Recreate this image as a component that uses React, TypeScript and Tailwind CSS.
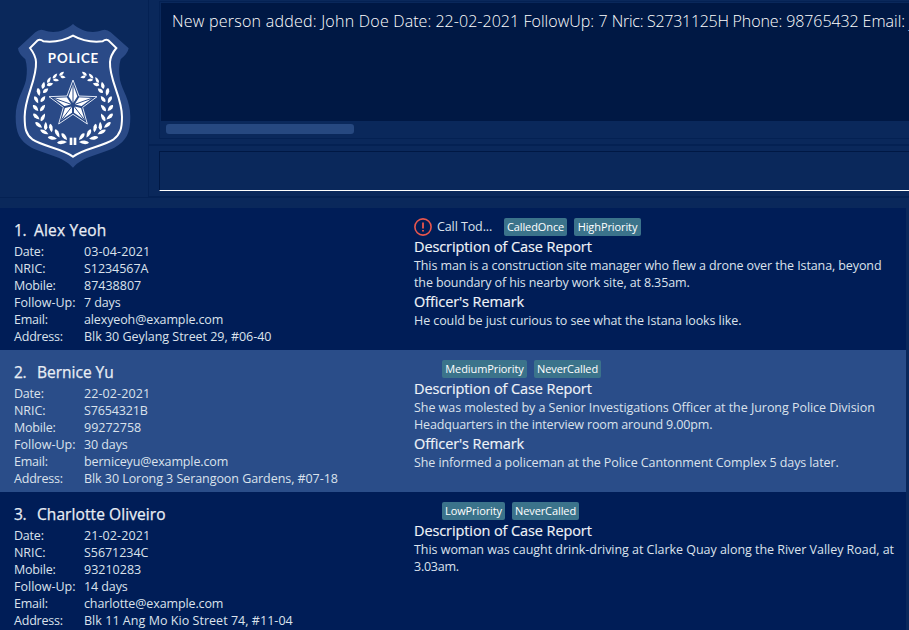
type Line = { text: string; cls?: string };
type Person = {
  id: number;
  name: Line;
  fields: { label: Line; value: Line }[];
  alert?: string;
  tags: Line[];
  description: Line[];
  remark: Line[];
  selected?: boolean;
};

const labels = {
  date: { text: "Date:", cls: "tracking-[-0.2px]" },
  nric: { text: "NRIC:", cls: "tracking-[-0.05px]" },
  mobile: { text: "Mobile:", cls: "tracking-[-0.2px]" },
  followUp: { text: "Follow-Up:", cls: "tracking-normal" },
  email: { text: "Email:", cls: "tracking-[-0.2px]" },
  address: { text: "Address:", cls: "tracking-[-0.2px]" },
};

const people: Person[] = [
  {
    id: 1,
    name: { text: "Alex Yeoh", cls: "-ml-[3px] tracking-[0.2px]" },
    fields: [
      { label: labels.date, value: { text: "03-04-2021", cls: "tracking-[0.1px]" } },
      { label: labels.nric, value: { text: "S1234567A", cls: "tracking-[-0.05px]" } },
      { label: labels.mobile, value: { text: "87438807" } },
      { label: labels.followUp, value: { text: "7 days", cls: "tracking-[-0.1px]" } },
      { label: labels.email, value: { text: "alexyeoh@example.com", cls: "tracking-[-0.12px]" } },
      { label: labels.address, value: { text: "Blk 30 Geylang Street 29, #06-40", cls: "tracking-[-0.03px]" } },
    ],
    alert: "Call Tod...",
    tags: [
      { text: "CalledOnce", cls: "w-[63px]" },
      { text: "HighPriority", cls: "w-[67px]" },
    ],
    description: [
      {
        text: "This man is a construction site manager who flew a drone over the Istana, beyond",
        cls: "tracking-[-0.1px]",
      },
      { text: "the boundary of his nearby work site, at 8.35am.", cls: "tracking-[-0.12px]" },
    ],
    remark: [
      { text: "He could be just curious to see what the Istana looks like.", cls: "tracking-[-0.08px]" },
    ],
  },
  {
    id: 2,
    name: { text: "Bernice Yu" },
    selected: true,
    fields: [
      { label: labels.date, value: { text: "22-02-2021", cls: "tracking-[0.1px]" } },
      { label: labels.nric, value: { text: "S7654321B", cls: "tracking-[-0.15px]" } },
      { label: labels.mobile, value: { text: "99272758" } },
      { label: labels.followUp, value: { text: "30 days", cls: "tracking-[-0.1px]" } },
      { label: labels.email, value: { text: "berniceyu@example.com", cls: "tracking-[-0.14px]" } },
      { label: labels.address, value: { text: "Blk 30 Lorong 3 Serangoon Gardens, #07-18", cls: "tracking-[-0.06px]" } },
    ],
    tags: [
      { text: "MediumPriority", cls: "w-[85px]" },
      { text: "NeverCalled", cls: "w-[67px]" },
    ],
    description: [
      {
        text: "She was molested by a Senior Investigations Officer at the Jurong Police Division",
        cls: "tracking-[-0.045px]",
      },
      { text: "Headquarters in the interview room around 9.00pm.", cls: "tracking-[-0.14px]" },
    ],
    remark: [
      { text: "She informed a policeman at the Police Cantonment Complex 5 days later.", cls: "tracking-[-0.1px]" },
    ],
  },
  {
    id: 3,
    name: { text: "Charlotte Oliveiro", cls: "tracking-[0.08px]" },
    fields: [
      { label: labels.date, value: { text: "21-02-2021", cls: "tracking-[0.1px]" } },
      { label: labels.nric, value: { text: "S5671234C", cls: "tracking-[-0.05px]" } },
      { label: labels.mobile, value: { text: "93210283" } },
      { label: labels.followUp, value: { text: "14 days", cls: "tracking-[-0.1px]" } },
      { label: labels.email, value: { text: "charlotte@example.com", cls: "tracking-[-0.12px]" } },
      { label: labels.address, value: { text: "Blk 11 Ang Mo Kio Street 74, #11-04", cls: "tracking-[0.04px]" } },
    ],
    tags: [
      { text: "LowPriority", cls: "w-[63px]" },
      { text: "NeverCalled", cls: "w-[67px]" },
    ],
    description: [
      {
        text: "This woman was caught drink-driving at Clarke Quay along the River Valley Road, at",
        cls: "tracking-[-0.035px]",
      },
      { text: "3.03am.", cls: "tracking-[-0.25px]" },
    ],
    remark: [],
  },
];

/* Left half of the wreath: x, y, rotation in degrees, half length */
const leaves: [number, number, number, number][] = [
  [185, 221, -38, 9],
  [189, 231, 12, 8],
  [165, 228, -48, 10],
  [168, 240, 3, 9],
  [147, 240, -60, 10],
  [150, 253, -14, 10],
  [130, 256, -78, 11],
  [137, 272, -38, 10],
  [116, 276, 78, 12],
  [129, 297, -52, 11],
  [109, 299, 62, 12],
  [128, 324, -52, 12],
  [107, 324, 48, 12],
  [129, 352, -62, 13],
  [109, 350, 42, 13],
  [137, 378, -88, 13],
  [116, 375, 38, 13],
  [153, 384, 80, 13],
  [133, 396, 28, 14],
  [172, 400, 62, 14],
  [157, 414, 10, 14],
  [193, 410, 50, 13],
  [186, 427, -4, 15],
];

const half = (
  <>
    {leaves.map(([x, y, r, l], i) => (
      <path
        key={i}
        d="M-12 0Q-5 -6.5 3 -6.3Q10 -5 12 0Q10 5 3 6.3Q-5 6.5 -12 0Z"
        transform={`translate(${x} ${y}) rotate(${r}) scale(${-l / 12} ${y < 245 ? 0.65 : 0.84})`}
      />
    ))}
    <rect x="209" y="413" width="8" height="22" />
  </>
);

function Badge() {
  return (
    <svg width="148" height="196" viewBox="0 0 444 588" aria-hidden="true">
      <path
        fill="#2a4a87"
        d="M219 72C196 92 164 103 132 91Q119 86 106 97L54 145Q55 161 76 178Q84 205 78 240C71 272 47 300 47 350C47 398 58 422 95 443C135 463 190 468 219 503C248 468 303 463 343 443C380 422 391 398 391 350C391 300 367 272 360 240Q354 205 362 178Q383 161 386 145L332 97Q319 86 306 91C274 103 242 92 219 72Z"
      />
      <path
        fill="none"
        stroke="#fff"
        strokeWidth="6"
        d="M219 107C194 121 166 128 130 124Q121 117 113 121L90 144Q107 166 108 186C111 240 74 290 74 350C74 385 77 402 97 418C130 440 187 445 219 470C251 445 308 440 341 418C361 402 366 385 366 350C366 290 327 240 330 186Q331 166 349 144L325 121Q317 117 308 124C272 128 244 121 219 107Z"
      />
      <text
        x="219"
        y="188"
        fill="#fff"
        textAnchor="middle"
        textLength="151"
        fontSize="40"
        fontWeight="700"
        fontFamily="Lato, sans-serif"
      >
        POLICE
      </text>
      <g fill="#fff">
        {half}
        <g transform="translate(438 0) scale(-1 1)">{half}</g>
      </g>
      <path
        fill="none"
        stroke="#dfe6f3"
        strokeWidth="3"
        d="M219 240L237 288L291 290L248 322L262 372L219 343L176 372L190 322L147 290L201 288Z"
      />
      <path
        fill="#fff"
        d="M219 253L233 292L277 294L242 320L254 360L219 336L184 360L196 320L161 294L205 292Z"
      />
      <g fill="none" stroke="#2a4a87" strokeWidth="3">
        <path d="M219 256V315M219 315L275 295M219 315L252 358M219 315L186 358M219 315L163 295" />
        <path strokeWidth="6" d="M219 315L235 290M219 315L246 322M219 315V340M219 315L192 322M219 315L203 290" />
      </g>
      <circle cx="219" cy="315" r="7" fill="#2a4a87" />
    </svg>
  );
}

function SubHeading({ children }: { children: string }) {
  return (
    <h3 className="h-[21px] text-[14.5px] leading-[21px] tracking-[-0.1px] text-[#f0f4f9] [-webkit-text-stroke:0.15px_#f0f4f9]">
      {children}
    </h3>
  );
}

function Row({ p }: { p: Person }) {
  return (
    <li
      className={`flex h-[142px] w-[906px] shrink-0 whitespace-nowrap ${p.selected ? "bg-[#2a4d89]" : "bg-[#001d57]"}`}
    >
      <div className="w-[414px] pt-[11px] pl-[14px]">
        <h2 className="flex h-6 text-[15.5px] leading-[22px] text-[#e8edf4] [-webkit-text-stroke:0.25px_#e8edf4]">
          <span className="w-[23px] tracking-[-0.5px]">{p.id}.</span>
          <span className={p.name.cls}>{p.name.text}</span>
        </h2>
        <dl>
          {p.fields.map((f) => (
            <div key={f.label.text} className="flex h-[17px]">
              <dt className={`w-[70px] ${f.label.cls}`}>{f.label.text}</dt>
              <dd>
                <span className={f.value.cls}>{f.value.text}</span>
              </dd>
            </div>
          ))}
        </dl>
      </div>
      <div className="pt-[10px]">
        <div className="flex h-[18px] items-center">
          <div className="flex w-[28px] shrink-0 items-center">
            {p.alert && (
              <svg width="18" height="18" viewBox="0 0 18 18" fill="none" stroke="#e8564d" aria-hidden="true">
                <circle cx="9" cy="9" r="8.1" strokeWidth="1.6" />
                <path d="M9 4.5V10.5M9 12V13.6" strokeWidth="1.8" />
              </svg>
            )}
          </div>
          {p.alert && <span className="-mt-px -ml-[5px] w-[67px] tracking-[-0.1px]">{p.alert}</span>}
          <div className="flex gap-[7px]">
            {p.tags.map((t) => (
              <span
                key={t.text}
                className={`h-[18px] rounded-[2px] bg-[#3b738b] text-center text-[11px] leading-[18px] tracking-[-0.1px] text-white ${t.cls}`}
              >
                {t.text}
              </span>
            ))}
          </div>
        </div>
        <SubHeading>Description of Case Report</SubHeading>
        {p.description.map((l) => (
          <p key={l.text}>
            <span className={l.cls}>{l.text}</span>
          </p>
        ))}
        {p.remark.length > 0 && <SubHeading>Officer's Remark</SubHeading>}
        {p.remark.map((l) => (
          <p key={l.text}>
            <span className={l.cls}>{l.text}</span>
          </p>
        ))}
      </div>
    </li>
  );
}

export default function App() {
  return (
    <div className="flex h-[630px] w-[909px] flex-col overflow-hidden bg-[#0a285b] font-['Open_Sans','Noto_Sans',sans-serif] text-[12.5px] leading-[17px] text-[#dbe2ec]">
      <header className="flex h-[198px] shrink-0 border-b border-[#042153]">
        <div className="w-[149px] shrink-0 border-r border-[#042153]">
          <Badge />
        </div>
        <div className="flex min-w-0 grow flex-col">
          <section className="mt-px ml-[10px] h-[138px] border-t border-b border-l border-[#042153] pt-px pl-px">
            <div className="h-[118px] overflow-hidden bg-[#001844] pt-[6px] pl-[11px] text-[16px] leading-6 font-light whitespace-nowrap text-white">
              <span className="tracking-[0.24px]">New person added: John Doe </span>
              <span className="tracking-[0.04px]">Date: 22-02-2021 FollowUp: 7 </span>
              <span className="tracking-[-0.28px]">Nric: S2731125H </span>
              <span className="tracking-[-0.1px]">Phone: 98765432 </span>
              <span className="tracking-[0.02px]">Email: j</span>
            </div>
            <div className="mt-[3px] ml-[5px] h-[10px] w-[188px] rounded-[3px] bg-[#264880]" />
          </section>
          <div className="mt-[5px] h-[2px] bg-[#042153]" />
          <div className="mt-[5px] ml-[10px] h-10 border-t border-b border-l border-t-[#001844] border-b-white border-l-[#001844]" />
          <div className="mt-[5px] h-px bg-[#042153]" />
        </div>
      </header>
      <ul className="mt-[10px] flex flex-col">
        {people.map((p) => (
          <Row key={p.id} p={p} />
        ))}
      </ul>
    </div>
  );
}
